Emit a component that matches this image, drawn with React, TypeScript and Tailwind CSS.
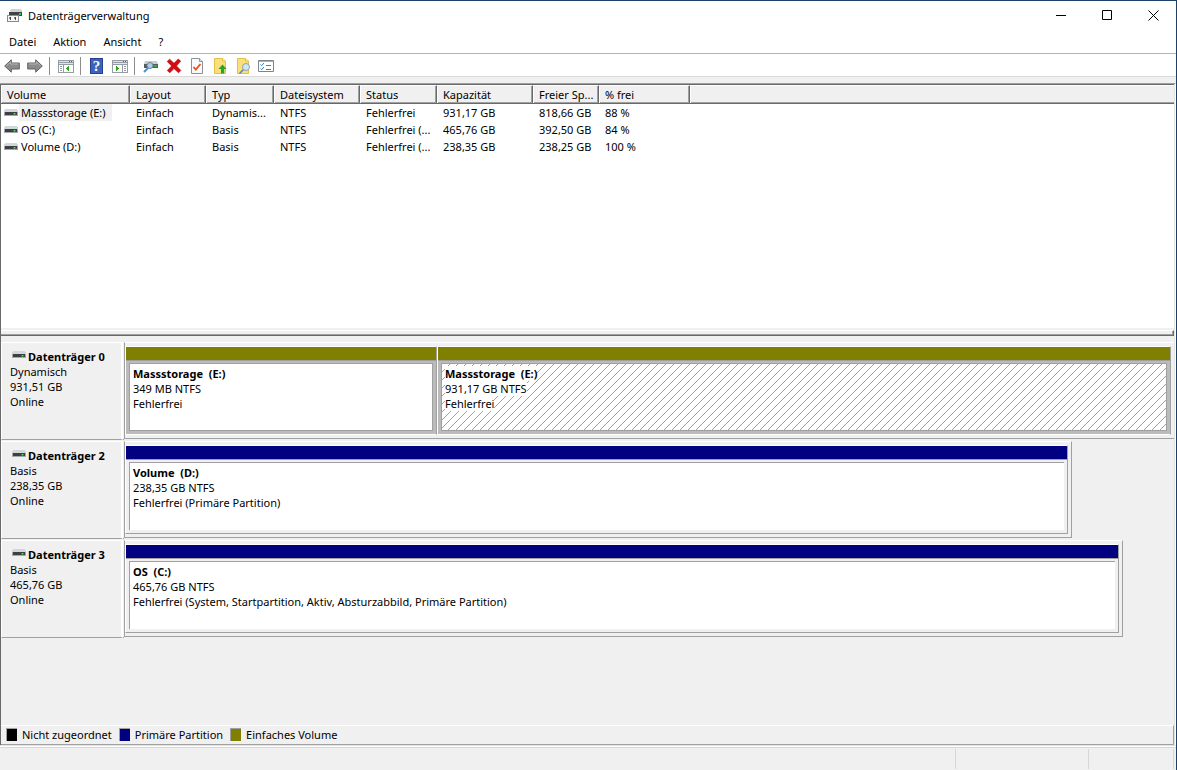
import type { ReactNode } from "react";

const columns = [
  { title: "Volume", width: "w-[129px]" },
  { title: "Layout", width: "w-[76px]" },
  { title: "Typ", width: "w-[68px]" },
  { title: "Dateisystem", width: "w-[86px]" },
  { title: "Status", width: "w-[77px]" },
  { title: "Kapazität", width: "w-[96px]" },
  { title: "Freier Sp...", width: "w-[66px]" },
  { title: "% frei", width: "w-[91px]" },
];

const volumes = [
  {
    name: "Massstorage (E:)",
    selected: true,
    cells: ["Einfach", "Dynamis...", "NTFS", "Fehlerfrei", "931,17 GB", "818,66 GB", "88 %"],
  },
  {
    name: "OS (C:)",
    selected: false,
    cells: ["Einfach", "Basis", "NTFS", "Fehlerfrei (...", "465,76 GB", "392,50 GB", "84 %"],
  },
  {
    name: "Volume (D:)",
    selected: false,
    cells: ["Einfach", "Basis", "NTFS", "Fehlerfrei (...", "238,35 GB", "238,25 GB", "100 %"],
  },
];

interface Partition {
  label: string;
  size: string;
  status: string;
  kind: "simple" | "primary";
  share: number;
  hatched?: boolean;
}

interface Disk {
  name: string;
  type: string;
  size: string;
  state: string;
  // share of the graph area the disk takes, in percent
  extent: number;
  partitions: Partition[];
}

const disks: Disk[] = [
  {
    name: "Datenträger 0",
    type: "Dynamisch",
    size: "931,51 GB",
    state: "Online",
    extent: 100,
    partitions: [
      { label: "Massstorage  (E:)", size: "349 MB NTFS", status: "Fehlerfrei", kind: "simple", share: 310 },
      { label: "Massstorage  (E:)", size: "931,17 GB NTFS", status: "Fehlerfrei", kind: "simple", share: 732, hatched: true },
    ],
  },
  {
    name: "Datenträger 2",
    type: "Basis",
    size: "238,35 GB",
    state: "Online",
    extent: 90.3,
    partitions: [
      { label: "Volume  (D:)", size: "238,35 GB NTFS", status: "Fehlerfrei (Primäre Partition)", kind: "primary", share: 1 },
    ],
  },
  {
    name: "Datenträger 3",
    type: "Basis",
    size: "465,76 GB",
    state: "Online",
    extent: 95.15,
    partitions: [
      {
        label: "OS  (C:)",
        size: "465,76 GB NTFS",
        status: "Fehlerfrei (System, Startpartition, Aktiv, Absturzabbild, Primäre Partition)",
        kind: "primary",
        share: 1,
      },
    ],
  },
];

const legend = [
  { label: "Nicht zugeordnet", color: "bg-black" },
  { label: "Primäre Partition", color: "bg-[#000080]" },
  { label: "Einfaches Volume", color: "bg-[#808000]" },
];

function DriveIcon() {
  return (
    <svg width="14" height="7" viewBox="0 0 14 7" className="shrink-0" shapeRendering="crispEdges" aria-hidden="true">
      <path d="M1 0h12v1h1v2H0V1h1z" fill="#d3d7da" />
      <path d="M0 3h14v4H0z" fill="#a5a9ac" />
      <path d="M1 3h12v3H1z" fill="#3c4043" />
      <path d="M9 4h3v2H9z" fill="#1c8a2c" />
      <path d="M10 4h1v1h-1z" fill="#5dff5d" />
    </svg>
  );
}

function AppIcon() {
  return (
    <svg width="16" height="16" viewBox="0 0 16 16" shapeRendering="crispEdges" aria-hidden="true">
      <path d="M4 1h10v1h1v2H3V2h1z" fill="#cfd2d4" />
      <path d="M2 4h13v4H2z" fill="#3f4346" />
      <path d="M12 5h2v2h-2z" fill="#35d04a" />
      <path d="M0 7h12v1H0z" fill="#8b8f92" />
      <path d="M0 8h12v6H0z" fill="#85898c" />
      <path d="M1 8h10v5H1z" fill="#f7f7f7" />
      <path d="M3 9h1v3H3zM8 9h1v3H8z" fill="#4a4a4a" />
      <path d="M2 9h1v2H2zM7 9h1v2H7z" fill="#8a8a8a" />
    </svg>
  );
}

function ArrowIcon({ flip = false }: { flip?: boolean }) {
  return (
    <svg width="16" height="16" viewBox="0 0 16 16" className={flip ? "-scale-x-100" : ""} aria-hidden="true">
      <path d="M.7 8 7.3 1.8V5h8v6h-8v3.2z" fill="#8c8c8c" stroke="#626262" />
      <path d="M2.5 7.8 6.5 4v2h7.8" fill="none" stroke="#b4b4b4" />
    </svg>
  );
}

function ConsoleIcon({ right = false }: { right?: boolean }) {
  return (
    <svg width="16" height="16" viewBox="0 0 16 16" shapeRendering="crispEdges" aria-hidden="true">
      <path d="M0 2h16v13H0z" fill="#959ca3" />
      <path d="M1 3h14v1H1z" fill="#dfe3e6" />
      <path d="M11 3h1v1h-1zM13 3h1v1h-1z" fill="#59636d" />
      <path d="M1 5h14v1H1z" fill="#e4e7ea" />
      <path d="M1 7h14v7H1z" fill="#fff" />
      {right ? (
        <>
          <path d="M10 7h1v7h-1z" fill="#959ca3" />
          <path d="M12 8h2v1h-2zM12 10h2v1h-2zM12 12h2v1h-2z" fill="#959ca3" />
          <path d="M4 8v5h1v-1h1v-1h1v-1H6V9H5V8z" fill="#31a31f" />
        </>
      ) : (
        <>
          <path d="M5 7h1v7H5z" fill="#959ca3" />
          <path d="M2 8h2v1H2zM2 10h2v1H2zM2 12h2v1H2z" fill="#959ca3" />
          <path d="M11 8v5h-1v-1H9v-1H8v-1h1V9h1V8z" fill="#31a31f" />
        </>
      )}
    </svg>
  );
}

function HelpIcon() {
  return (
    <span className="flex h-4 w-[13px] items-center justify-center border border-[#24418f] bg-[#3c62bd] font-['Liberation_Serif',serif] text-[15px] leading-4 font-bold text-white">
      ?
    </span>
  );
}

function DiskSearchIcon() {
  return (
    <svg width="16" height="16" viewBox="0 0 16 16" aria-hidden="true">
      <path d="M2 3h12l1 3H1z" fill="#c9cdd0" />
      <path d="M1 6h14v4H1z" fill="#565b5e" />
      <path d="M11 7h3v2h-3z" fill="#2fae43" />
      <path d="M5.5 9.500 1 14" stroke="#4f8fc4" strokeWidth="2" />
      <circle cx="7" cy="7.5" r="3" fill="#a9cdeb" stroke="#6f8798" />
    </svg>
  );
}

function DeleteIcon() {
  return (
    <svg width="16" height="16" viewBox="0 0 16 16" aria-hidden="true">
      <path
        d="M1.2 3.4 3.6 1.2 8 5.3l4.2-4.2 2.5 2L10.5 8l4.4 4.4-2.4 2.4L8 10.6l-4.2 4.2L1.3 12.5 5.6 8z"
        fill="#d50b10"
        stroke="#a8060a"
        strokeWidth=".6"
      />
    </svg>
  );
}

function CheckDocIcon() {
  return (
    <svg width="16" height="16" viewBox="0 0 16 16" aria-hidden="true">
      <path d="M2.5.5h8l3 3v12h-11z" fill="#f8f9fa" stroke="#8b9299" />
      <path d="M10.5.5v3h3" fill="#dfe3e6" stroke="#8b9299" />
      <path d="m4.5 9 2.3 2.6L11.5 6" fill="none" stroke="#e8511f" strokeWidth="1.8" />
    </svg>
  );
}

function FolderIcon({ children }: { children: ReactNode }) {
  return (
    <svg width="16" height="16" viewBox="0 0 16 16" aria-hidden="true">
      <path d="M2.5.5h8l3 2.5v12.5h-11z" fill="#fbdf7a" stroke="#e6bf4b" />
      <path d="M10.5.5V3h3" fill="#fff0b5" stroke="#e6bf4b" />
      {children}
    </svg>
  );
}

function ListIcon() {
  return (
    <svg width="16" height="16" viewBox="0 0 16 16" aria-hidden="true">
      <path d="M.5 2.5h15v11H.5z" fill="#fff" stroke="#7d858c" />
      <path d="M1 3h14v1H1z" fill="#a9b0b6" />
      <path d="m2.500 6.500 1.200 1.200L6 5M2.500 10.500l1.200 1.200L6 9" fill="none" stroke="#2f7fd0" />
      <path d="M8 7h5v1H8zM8 11h5v1H8z" fill="#6f767d" />
    </svg>
  );
}

function ToolButton({ label, children }: { label: string; children: ReactNode }) {
  return (
    <button type="button" aria-label={label} className="flex h-[22px] w-[23px] items-center justify-center">
      {children}
    </button>
  );
}

function ToolSeparator() {
  return <span className="mr-1 ml-[3px] h-[18px] w-px bg-[#8d8d8d]" />;
}

function CaptionButton({ label, children }: { label: string; children: ReactNode }) {
  return (
    <button type="button" aria-label={label} className="flex h-[29px] w-[46px] items-center justify-center">
      <svg width="11" height="11" viewBox="0 0 11 11" fill="none" stroke="#000" aria-hidden="true">
        {children}
      </svg>
    </button>
  );
}

function TitleBar() {
  return (
    <header className="flex h-[29px] items-center bg-white">
      <span className="pr-[5px] pl-[7px]">
        <AppIcon />
      </span>
      <h1 className="flex-1">Datenträgerverwaltung</h1>
      <CaptionButton label="Minimieren">
        <path d="M0 5.5h10" />
      </CaptionButton>
      <CaptionButton label="Maximieren">
        <path d="M.5.5h9v9h-9z" />
      </CaptionButton>
      <CaptionButton label="Schließen">
        <path d="m.5.5 10 10M10.5.5l-10 10" />
      </CaptionButton>
    </header>
  );
}

function MenuBar() {
  return (
    <nav className="flex h-[24px] items-center gap-[17px] border-b border-[#b2b6bb] bg-white pl-[9px]">
      {["Datei", "Aktion", "Ansicht", "?"].map((item) => (
        <button key={item} type="button">
          {item}
        </button>
      ))}
    </nav>
  );
}

function Toolbar() {
  return (
    <div role="toolbar" className="flex h-[23px] items-center border-b border-[#dadada] bg-white pt-0.5">
      <ToolButton label="Zurück">
        <ArrowIcon />
      </ToolButton>
      <ToolButton label="Vorwärts">
        <ArrowIcon flip />
      </ToolButton>
      <ToolSeparator />
      <ToolButton label="Konsolenstruktur">
        <ConsoleIcon />
      </ToolButton>
      <ToolSeparator />
      <ToolButton label="Hilfe">
        <HelpIcon />
      </ToolButton>
      <ToolButton label="Aktionsbereich">
        <ConsoleIcon right />
      </ToolButton>
      <ToolSeparator />
      <ToolButton label="Datenträger neu einlesen">
        <DiskSearchIcon />
      </ToolButton>
      <ToolButton label="Löschen">
        <DeleteIcon />
      </ToolButton>
      <ToolButton label="Eigenschaften">
        <CheckDocIcon />
      </ToolButton>
      <ToolButton label="Öffnen">
        <FolderIcon>
          <path d="M10.5 6.5 14.5 11h-2.3v4.5H9V11H6.5z" fill="#25a52b" />
        </FolderIcon>
      </ToolButton>
      <ToolButton label="Durchsuchen">
        <FolderIcon>
          <path d="m8.5 11.5-4 4" stroke="#5f87a8" strokeWidth="1.6" />
          <circle cx="11" cy="9" r="3.5" fill="#cfe6f5" stroke="#8aa3b5" />
        </FolderIcon>
      </ToolButton>
      <ToolButton label="Liste">
        <ListIcon />
      </ToolButton>
    </div>
  );
}

function VolumeList() {
  return (
    <section className="h-[244px] border-t border-[#696969] bg-white">
      <table className="w-full table-fixed border-separate border-spacing-0 text-left">
        <thead>
          <tr className="h-[19px] bg-[#f0f0f0]">
            {columns.map((col) => (
              <th
                key={col.title}
                className={`${col.width} border-t border-r border-b border-t-white border-r-[#696969] border-b-[#696969] p-0 pl-1.5 font-normal whitespace-nowrap shadow-[inset_1px_0_#fff,inset_-1px_-1px_#a0a0a0]`}
              >
                {col.title}
              </th>
            ))}
            <th className="border-t border-b border-t-white border-b-[#696969] p-0 shadow-[inset_1px_0_#fff,inset_0_-1px_#a0a0a0]" />
          </tr>
        </thead>
        <tbody>
          {volumes.map((vol) => (
            <tr key={vol.name} className="h-[17px]">
              <td className="p-0 pl-[3px]">
                <span className="flex items-center gap-px">
                  <DriveIcon />
                  <span className={vol.selected ? "bg-[#f0f0f0] pr-1.5 pl-0.5 leading-[17px]" : "pr-1.5 pl-0.5 leading-[17px]"}>
                    {vol.name}
                  </span>
                </span>
              </td>
              {vol.cells.map((cell, i) => (
                <td key={i} className="p-0 pl-1.5 whitespace-nowrap">
                  {cell}
                </td>
              ))}
              <td className="p-0" />
            </tr>
          ))}
        </tbody>
      </table>
    </section>
  );
}

function Hatching() {
  return (
    <svg className="absolute inset-0 h-full w-full" aria-hidden="true">
      <defs>
        <pattern id="hatch" width="8" height="8" patternUnits="userSpaceOnUse">
          <path
            d="M7 0h1v1H7zM6 1h1v1H6zM5 2h1v1H5zM4 3h1v1H4zM3 4h1v1H3zM2 5h1v1H2zM1 6h1v1H1zM0 7h1v1H0z"
            fill="#a0a0a0"
            shapeRendering="crispEdges"
          />
        </pattern>
      </defs>
      <rect width="100%" height="100%" fill="url(#hatch)" />
    </svg>
  );
}

function PartitionBox({ part }: { part: Partition }) {
  const simple = part.kind === "simple";
  return (
    <div
      className={`flex min-w-0 basis-0 flex-col border border-t-white border-l-white border-r-[#a0a0a0] ${simple ? "border-b-white" : "border-b-[#a0a0a0]"}`}
      style={{ flexGrow: part.share }}
    >
      <div className={`h-3.5 border-b border-[#a0a0a0] ${simple ? "bg-[#808000]" : "bg-[#000080]"}`} />
      <div className={`flex flex-1 p-[3px] pt-0.5 ${simple ? "bg-[#bbbbbb]" : "bg-[#f0f0f0]"}`}>
        <div
          className={`relative flex-1 border-[#a0a0a0] bg-white pt-0.5 pl-[3px] whitespace-pre ${simple ? "border" : "border-t border-l"}`}
        >
          {part.hatched && <Hatching />}
          <div className="relative flex flex-col items-start">
            <strong className="bg-white">{part.label}</strong>
            <span className="bg-white">{part.size}</span>
            <span className="bg-white">{part.status}</span>
          </div>
        </div>
      </div>
    </div>
  );
}

function DiskRow({ disk }: { disk: Disk }) {
  return (
    <div className="flex h-[99px] pt-px">
      <div className="w-[122px] shrink-0 border-t border-r-2 border-b border-l border-white border-b-[#a0a0a0] pt-1.5 pl-2">
        <div className="flex items-start gap-0.5 pl-0.5">
          <span className="pt-0.5">
            <DriveIcon />
          </span>
          <strong className="whitespace-nowrap">{disk.name}</strong>
        </div>
        <p>{disk.type}</p>
        <p>{disk.size}</p>
        <p>{disk.state}</p>
      </div>
      <div className="w-px border-b border-[#a0a0a0]" />
      <div className="flex-1 pb-px">
        <div
          className={`flex h-full border-t border-b border-l border-[#a0a0a0] border-t-white py-[3px] pr-[3px] ${disk.extent < 100 ? "border-r" : ""}`}
          style={{ width: `${disk.extent}%` }}
        >
          {disk.partitions.map((part) => (
            <PartitionBox key={part.size} part={part} />
          ))}
        </div>
      </div>
    </div>
  );
}

function Legend() {
  return (
    <ul className="flex h-5 gap-[7px] border-t border-r border-b border-[#a0a0a0] border-t-white pt-px pl-[5px]">
      {legend.map((item) => (
        <li key={item.label} className="flex h-[15px] items-center gap-[5px]">
          <span className={`h-[13px] w-[11px] border-t border-l border-[#a0a0a0] ${item.color}`} />
          {item.label}
        </li>
      ))}
    </ul>
  );
}

export default function App() {
  return (
    <div className="flex h-screen min-h-[600px] flex-col border-t border-r border-[#1c4166] bg-[#f0f0f0] font-['Noto_Sans','Open_Sans',sans-serif] text-[11px] leading-[15px] text-black">
      <TitleBar />
      <MenuBar />
      <Toolbar />
      <div className="h-1.5 shrink-0" />
      <main className="flex flex-1 flex-col border-t border-r border-t-[#a0a0a0] border-r-white">
        <div className="flex flex-1 flex-col border-r border-l border-r-[#e3e3e3] border-l-[#696969]">
          <VolumeList />
          <div className="mt-0.5 h-1.5 border-t border-r border-b border-t-white border-r-[#696969] border-b-[#696969] shadow-[inset_-1px_-1px_#a0a0a0]" />
          <section className="flex-1 pt-[5px]">
            {disks.map((disk) => (
              <DiskRow key={disk.name} disk={disk} />
            ))}
          </section>
          <Legend />
        </div>
      </main>
      <footer className="flex h-[25px] shrink-0 flex-col border-t border-[#e3e3e3]">
        <div className="h-px bg-white" />
        <div className="flex flex-1 justify-end border-t border-[#d7d7d7] py-px">
          <span className="w-[133px] border-l border-[#d7d7d7]" />
          <span className="mr-0.5 w-[86px] border-r border-l border-[#d7d7d7]" />
        </div>
      </footer>
    </div>
  );
}
